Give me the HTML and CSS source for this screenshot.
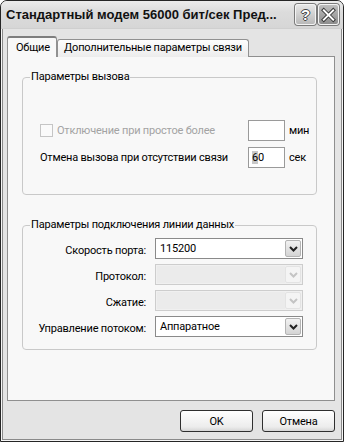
FILE: index.html
```html
<!DOCTYPE html>
<html lang="ru">
<head>
  <meta charset="UTF-8" />
  <title>Свойства модема</title>
  <link rel="stylesheet" href="styles.css">
</head>
<body>
  <div class="window">
    <div class="titlebar">
      <span class="title">Стандартный модем 56000 бит/сек Пред...</span>
      <div class="caption-buttons">
        <span class="cap-btn help">?</span>
        <span class="cap-btn close">
          <!-- крестик закрытия -->
          <svg viewBox="0 0 20 20" width="20" height="20">
            <path d="M5 5 L15 15 M15 5 L5 15" stroke="#3a3a3a" stroke-width="4" stroke-linecap="square"/>
            <path d="M5 5 L15 15 M15 5 L5 15" stroke="#fff" stroke-width="2" stroke-linecap="square"/>
          </svg>
        </span>
      </div>
    </div>

    <div class="client">
      <div class="tabs">
        <div class="tab active">Общие</div>
        <div class="tab">Дополнительные параметры связи</div>
      </div>

      <div class="panel">
        <fieldset class="group call">
          <legend>Параметры вызова</legend>
          <div class="call-grid">
            <div class="check-label disabled">
              <span class="checkbox"></span>
              <span>Отключение при простое более</span>
            </div>
            <span class="textbox"></span>
            <span class="unit">мин</span>

            <div class="check-label">
              <span>Отмена вызова при отсутствии связи</span>
            </div>
            <span class="textbox"><span class="selected">6</span>0</span>
            <span class="unit">сек</span>
          </div>
        </fieldset>

        <fieldset class="group line">
          <legend>Параметры подключения линии данных</legend>
          <div class="line-grid">
            <span class="field-label">Скорость порта:</span>
            <div class="combo">
              <span class="combo-value">115200</span>
              <span class="combo-arrow"><svg viewBox="0 0 9 6" width="9" height="6"><path d="M1 1 L4.5 4.5 L8 1" fill="none" stroke="#222" stroke-width="2"/></svg></span>
            </div>

            <span class="field-label">Протокол:</span>
            <div class="combo disabled">
              <span class="combo-value"></span>
              <span class="combo-arrow"><svg viewBox="0 0 9 6" width="9" height="6"><path d="M1 1 L4.5 4.5 L8 1" fill="none" stroke="#c4c4c4" stroke-width="2"/></svg></span>
            </div>

            <span class="field-label">Сжатие:</span>
            <div class="combo disabled">
              <span class="combo-value"></span>
              <span class="combo-arrow"><svg viewBox="0 0 9 6" width="9" height="6"><path d="M1 1 L4.5 4.5 L8 1" fill="none" stroke="#c4c4c4" stroke-width="2"/></svg></span>
            </div>

            <span class="field-label">Управление потоком:</span>
            <div class="combo">
              <span class="combo-value">Аппаратное</span>
              <span class="combo-arrow"><svg viewBox="0 0 9 6" width="9" height="6"><path d="M1 1 L4.5 4.5 L8 1" fill="none" stroke="#222" stroke-width="2"/></svg></span>
            </div>
          </div>
        </fieldset>
      </div>

      <div class="dialog-buttons">
        <button class="btn">OK</button>
        <button class="btn">Отмена</button>
      </div>
    </div>
  </div>
</body>
</html>
```

FILE: styles.css
```css
* {
  box-sizing: border-box;
}

body {
  margin: 0;
  background: #fff;
  font-family: Roboto, 'Liberation Sans', sans-serif;
  font-size: 11px;
  letter-spacing: -0.2px;
  color: #000;
}

.window {
  width: 344px;
  height: 442px;
  display: flex;
  flex-direction: column;
  background: #e4e4e4;
  border: 1px solid #262626;
  border-radius: 7px 7px 0 0;
  box-shadow: inset 0 0 0 1px #f6f6f6, inset 0 0 0 2px #8a8a8a;
  overflow: hidden;
}

/* Заголовок окна */
.titlebar {
  height: 28px;
  flex: none;
  display: flex;
  align-items: center;
  justify-content: space-between;
  padding: 0 4px 0 5px;
  background: linear-gradient(#ececec, #dcdcdc 40%, #d6d6d6);
  border-bottom: 1px solid #cfcfcf;
}

.title {
  font-family: 'Liberation Sans', Arial, sans-serif;
  font-weight: bold;
  font-size: 13px;
  letter-spacing: 0;
  color: #111;
  white-space: nowrap;
}

.caption-buttons {
  display: flex;
  gap: 2px;
}

.cap-btn {
  width: 21px;
  height: 21px;
  border: 1px solid #f4f4f4;
  border-radius: 3px;
  display: flex;
  align-items: center;
  justify-content: center;
  box-shadow: 0 0 0 1px #7a7a7a;
}

.help {
  background: linear-gradient(#e6e6e6, #b9b9b9);
  color: #fff;
  font-family: 'Liberation Sans', Arial, sans-serif;
  font-weight: bold;
  font-size: 15px;
  text-shadow: 1px 0 0 #444, -1px 0 0 #444, 0 1px 0 #444, 0 -1px 0 #444;
}

.close {
  background: linear-gradient(#bdbdbd, #8e8e8e);
}

/* Клиентская область */
.client {
  flex: 1;
  display: flex;
  flex-direction: column;
  padding: 7px 8px 0 6px;
}

.tabs {
  display: flex;
  align-items: flex-end;
  height: 21px;
  position: relative;
  z-index: 1;
  margin-bottom: -1px;
}

.tab {
  height: 18px;
  padding: 0 6px;
  line-height: 16px;
  border: 1px solid #919191;
  border-bottom: none;
  border-radius: 3px 3px 0 0;
  background: linear-gradient(#fdfdfd, #ececec);
  white-space: nowrap;
}

.tab.active {
  height: 21px;
  width: 50px;
  padding: 0 0 0 8px;
  line-height: 19px;
  background: #f8f8f8;
  border-top: 2px solid #7e7e7e;
}

.panel {
  height: 345px;
  border: 1px solid #8f8f8f;
  background: #f8f8f8;
  padding: 13px 0 0 14px;
}

.group {
  margin: 0;
  width: 295px;
  border: 1px solid #c9c9c9;
  border-radius: 4px;
  padding: 0;
}

.group legend {
  padding: 0 1px;
  margin-left: 7px;
  line-height: 14px;
}

.group.call {
  height: 125px;
}

.call-grid {
  display: grid;
  grid-template-columns: 204px 37px auto;
  grid-auto-rows: 21px;
  row-gap: 6px;
  column-gap: 4px;
  align-items: center;
  padding: 36px 0 0 17px;
}

.check-label {
  display: flex;
  align-items: center;
  gap: 4px;
  white-space: nowrap;
}

.check-label.disabled {
  color: #a3a3a3;
}

.checkbox {
  width: 13px;
  height: 13px;
  border: 1px solid #c5c5c5;
  background: #fafafa;
}

.textbox {
  height: 21px;
  border: 1px solid #9a9a9a;
  background: #fff;
  padding: 3px 0 0 3px;
  line-height: 14px;
}

.selected {
  background: #c8c8c8;
}

.group.line {
  margin-top: 23px;
  height: 132px;
}

.line-grid {
  display: grid;
  grid-template-columns: 1fr 148px;
  grid-auto-rows: 21px;
  row-gap: 5px;
  column-gap: 9px;
  align-items: center;
  padding: 6px 13px 0 0;
}

.field-label {
  text-align: right;
  padding-top: 4px;
  white-space: nowrap;
}

.combo {
  height: 21px;
  display: flex;
  border: 1px solid #8a8a8a;
  background: #fff;
  padding: 1px;
}

.combo-value {
  flex: 1;
  padding: 1px 0 0 3px;
  line-height: 16px;
}

.combo-arrow {
  width: 16px;
  display: flex;
  align-items: center;
  justify-content: center;
  border: 1px solid #b4b4b4;
  border-radius: 2px;
  background: linear-gradient(#f2f2f2, #d4d4d4);
}

.combo.disabled {
  border-color: #cdcdcd;
  background: #f0f0f0;
}

.combo.disabled .combo-value {
  background: #ebebeb;
}

.combo.disabled .combo-arrow {
  border-color: #e3e3e3;
  background: #f4f4f4;
}

/* Кнопки диалога */
.dialog-buttons {
  display: flex;
  justify-content: flex-end;
  gap: 9px;
  padding-top: 9px;
}

.btn {
  width: 73px;
  height: 22px;
  font-family: inherit;
  font-size: 11px;
  letter-spacing: inherit;
  border: 1px solid #2f2f2f;
  border-radius: 3px;
  background: linear-gradient(#ffffff, #ececec 80%, #d6d6d6);
  padding: 0;
}
```
